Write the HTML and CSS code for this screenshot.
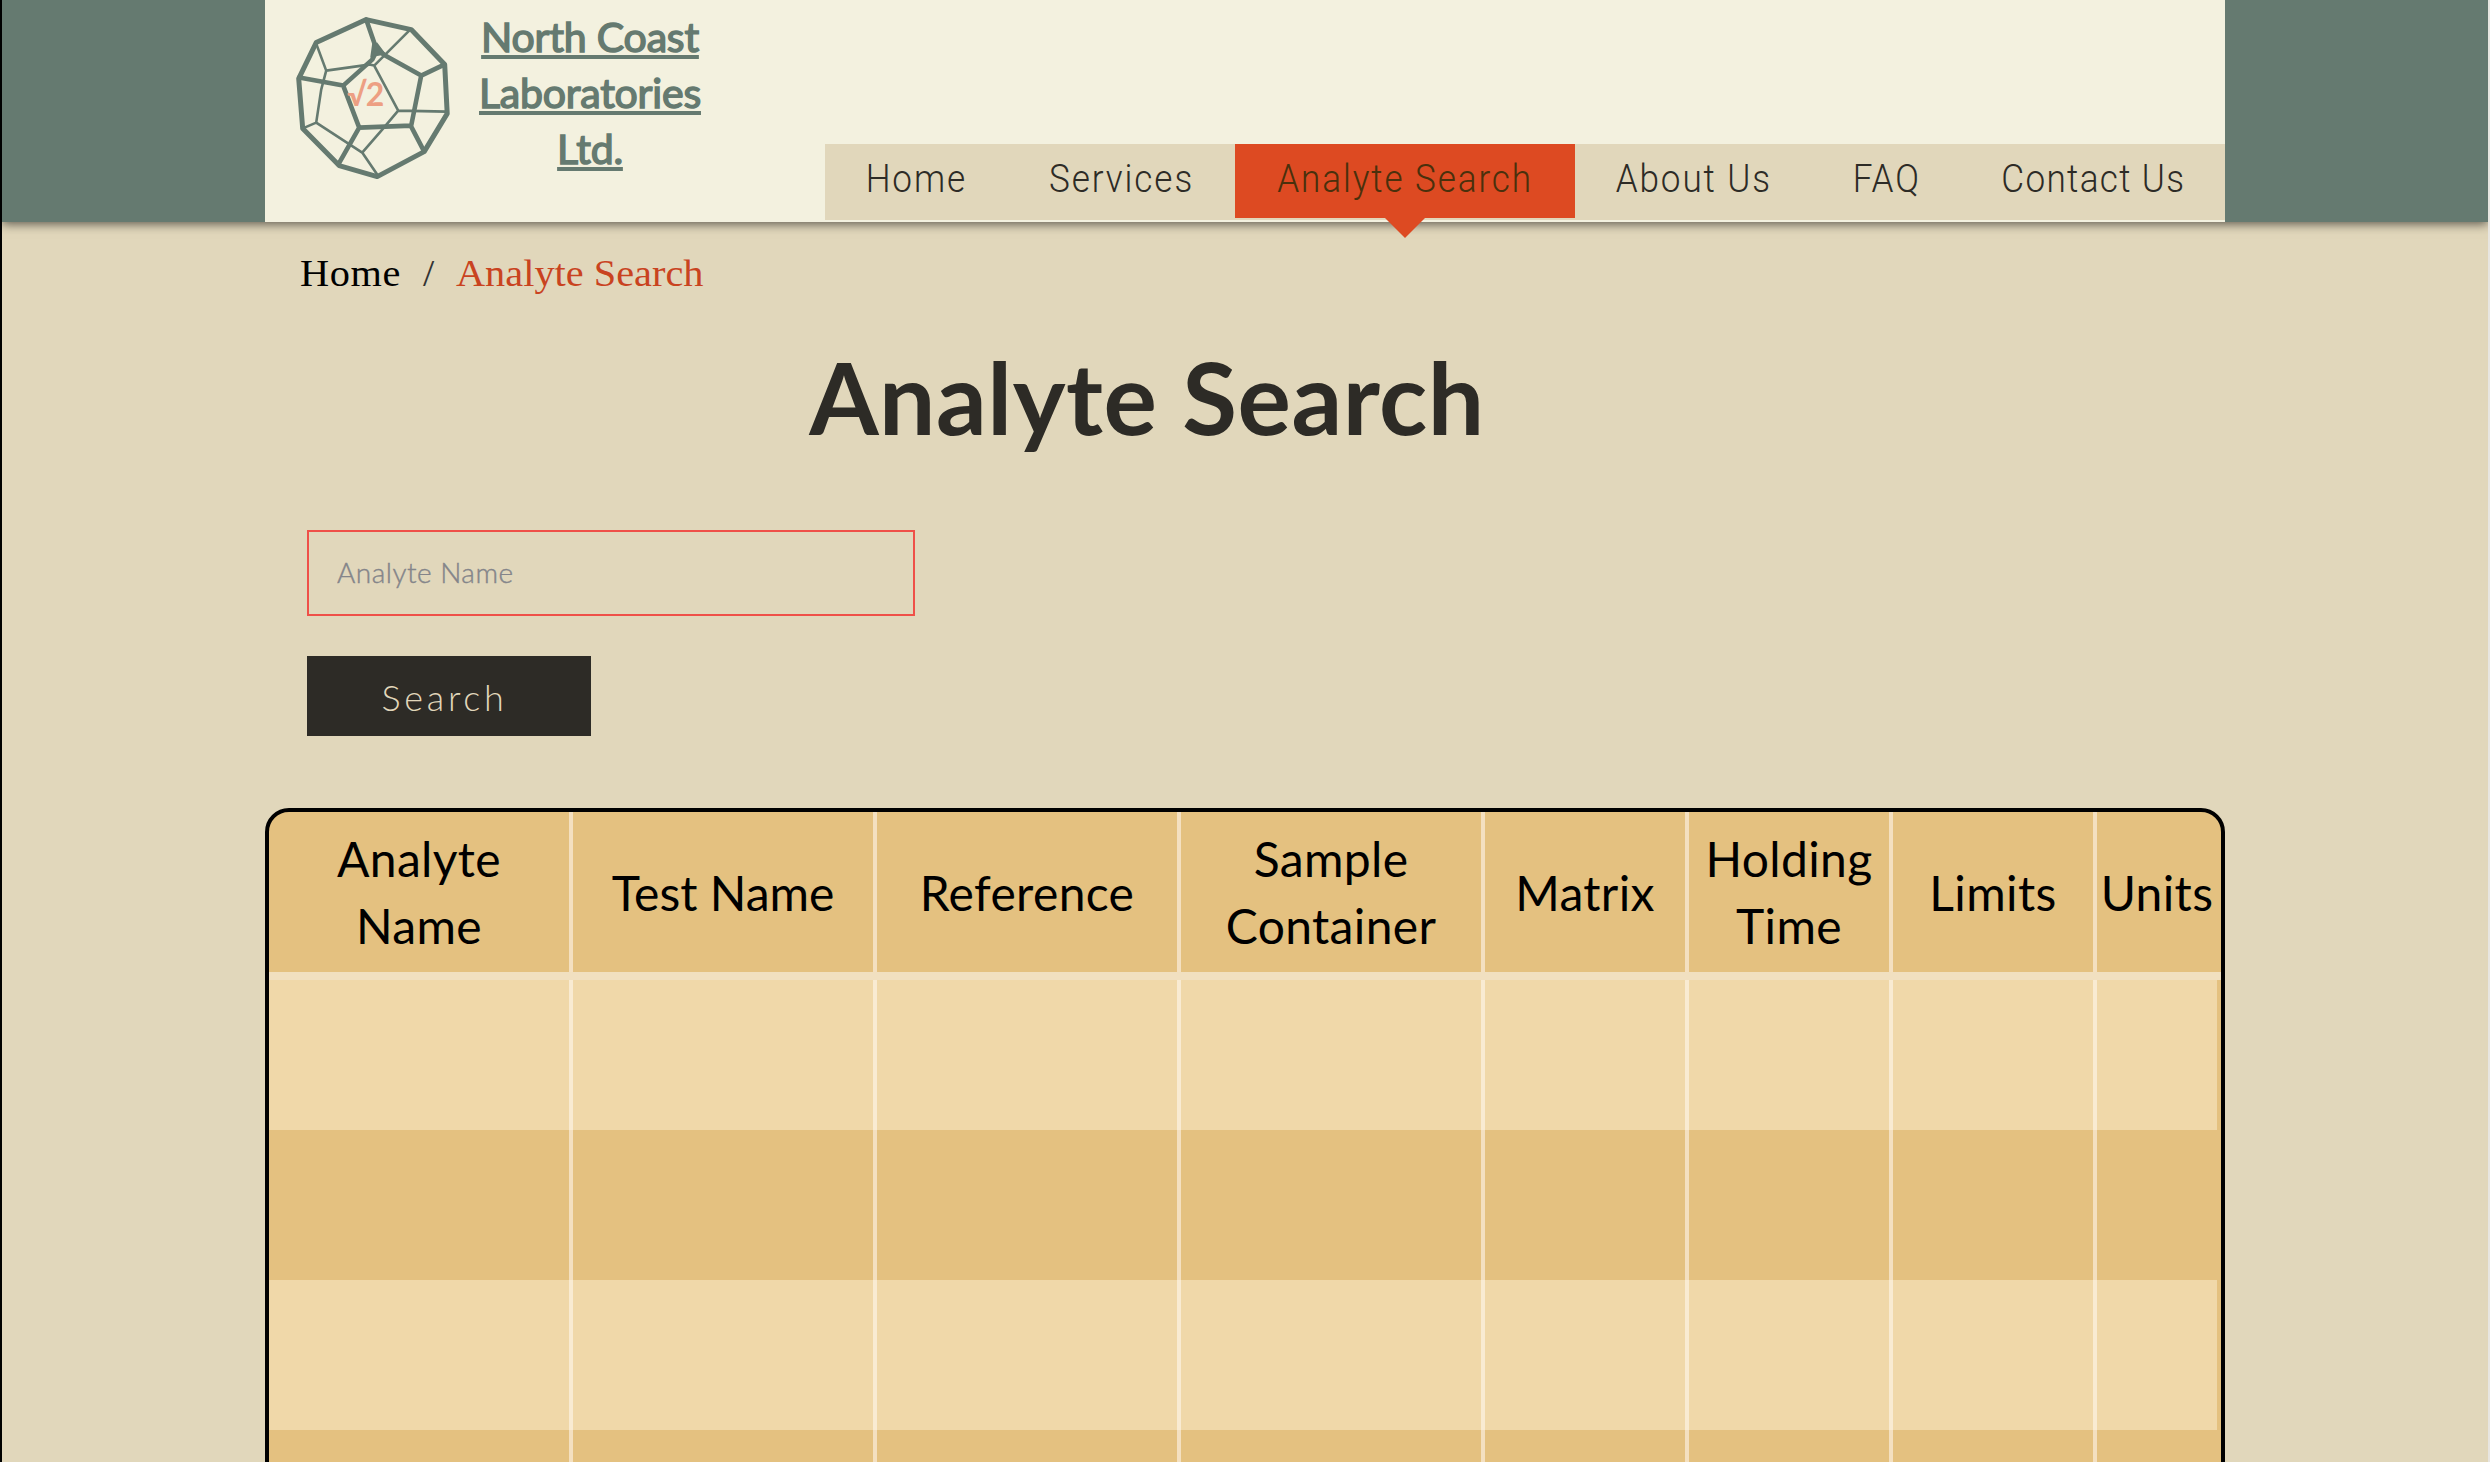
FILE: index.html
```html
<!DOCTYPE html>
<html lang="en">
<head>
<meta charset="utf-8">
<title>Analyte Search</title>
<link rel="stylesheet" href="styles.css">
</head>
<body>
<header class="site-header">
  <div class="header-inner">
    <svg class="logo" viewBox="0 0 160 170" fill="none" stroke="#657a70" stroke-linejoin="round" stroke-linecap="round">
      <g transform="translate(.2 .6)">
        <path stroke-width="5" d="M72 10 117 20 150.500 55 153 104 130 142 83 167 45 156 8.500 119 4.500 69 22 33Z"/>
        <path stroke-width="4.600" d="M72 10 82 39 91 46 127 66 150 55M82 42 78 50 49 76 5 68M49 76 65 118 117 116 127 66M117 117 129 140M65 118 44 155"/>
        <path stroke-width="2.600" d="M116 20 90 46 80 56 104 101 152 102M80 56 75 55 32 61 22 34M32 61 27 80 22 113 8 119M22 113 68 143 83 165M68 143 88 120 104 101"/>
        <path fill="#657a70" stroke="none" d="M78 34 83 33 92 45 80 47 76 48Z"/>
      </g>
      <text class="logo-root" x="53" y="97">√2</text>
    </svg>
    <a class="brand">North Coast<br>Laboratories<br>Ltd.</a>
    <nav class="nav">
      <a class="nav-item home"><span>Home</span></a>
      <a class="nav-item services"><span>Services</span></a>
      <a class="nav-item active"><span>Analyte Search</span></a>
      <a class="nav-item about"><span>About Us</span></a>
      <a class="nav-item faq"><span>FAQ</span></a>
      <a class="nav-item contact"><span>Contact Us</span></a>
    </nav>
  </div>
</header>
<main class="content">
  <div class="breadcrumb"><a class="crumb">Home</a><span class="slash">/</span><span class="current">Analyte Search</span></div>
  <h1 class="title">Analyte Search</h1>
  <form class="search-form">
    <input class="field" type="text" placeholder="Analyte Name">
    <button class="search-button" type="button">Search</button>
  </form>
  <section class="results">
    <div class="row head">
      <div>Analyte<br>Name</div><div class="tight">Test Name</div><div>Reference</div><div>Sample<br>Container</div><div>Matrix</div><div>Holding<br>Time</div><div>Limits</div><div>Units</div>
    </div>
    <div class="row light"><div></div><div></div><div></div><div></div><div></div><div></div><div></div><div></div></div>
    <div class="row"><div></div><div></div><div></div><div></div><div></div><div></div><div></div><div></div></div>
    <div class="row light"><div></div><div></div><div></div><div></div><div></div><div></div><div></div><div></div></div>
    <div class="row"><div></div><div></div><div></div><div></div><div></div><div></div><div></div><div></div></div>
  </section>
</main>
</body>
</html>
```
FILE: styles.css
```css
* { box-sizing: border-box; }
body {
  margin: 0;
  height: 1462px;
  overflow: hidden;
  background: #e1d7bb;
  border-left: 2px solid #000;
  border-right: 2px solid #e8e6e1;
  font-family: Lato, sans-serif;
}
.site-header {
  position: relative;
  height: 222px;
  background: #657a70;
  box-shadow: 0 2px 10px rgba(0, 0, 0, .6);
  clip-path: inset(0 0 -20px 0);
}
.header-inner {
  display: flex;
  align-items: flex-start;
  width: 1960px;
  height: 222px;
  margin-left: 263px;
  background: #f3f1df;
}
.logo { width: 160px; height: 170px; margin: 9px 0 0 29px; overflow: visible; }
.logo-root { font: 700 32px Lato, sans-serif; fill: #ed9f83; stroke: none; letter-spacing: -1px; }
.brand {
  width: 272px;
  margin-top: 9px;
  text-align: center;
  font-size: 41px;
  font-weight: 400;
  line-height: 56px;
  letter-spacing: -.2px;
  color: #657a70;
  -webkit-text-stroke: 1.5px #657a70;
  text-decoration: underline;
}
.nav {
  display: flex;
  width: 1400px;
  height: 76px;
  margin: 144px 0 0 auto;
  background: #e1d7bb;
}
.nav-item {
  position: relative;
  display: flex;
  justify-content: center;
  font: 300 39px/70px Roboto, sans-serif;
  letter-spacing: 2.1px;
  color: #2d2b26;
  white-space: nowrap;
}
.nav-item span { transform: scaleX(.9); }
.home { width: 182px; }
.services { width: 228px; padding-left: 2px; }
.active { width: 340px; height: 74px; background: #dd4a22; color: #4a300c; }
.active::after {
  content: "";
  position: absolute;
  left: 150px;
  top: 74px;
  border: solid transparent;
  border-width: 20px 20px 0;
  border-top-color: #dd4a22;
}
.about { width: 236px; padding-left: 2px; }
.faq { width: 150px; padding-left: 2px; }
.contact { width: 264px; padding-left: 1px; letter-spacing: 1.5px; }
.content { width: 1960px; margin-left: 263px; }
.breadcrumb {
  display: flex;
  height: 60px;
  margin-left: 35px;
  padding-top: 22px;
  font: 37px/60px "Liberation Serif", serif;
  color: #000;
  transform: scaleX(1.09);
  transform-origin: left;
}
.crumb { letter-spacing: .6px; }
.slash { margin: 0 20px; color: #333; }
.current { color: #c9431f; }
.title {
  width: 1764px;
  margin: 54px 0 0;
  text-align: center;
  font-size: 100px;
  line-height: 120px;
  font-weight: 700;
  letter-spacing: .55px;
  color: #2d2b26;
}
.search-form { display: flex; flex-direction: column; gap: 40px; margin: 74px 0 0 42px; }
.field {
  width: 608px;
  height: 86px;
  padding: 0 28px 2px;
  border: 2px solid #ef5048;
  background: transparent;
  font: 300 28px Lato, sans-serif;
  letter-spacing: .5px;
}
.field::placeholder { color: #84858a; -webkit-text-stroke: .4px #84858a; }
.search-button {
  width: 284px;
  height: 80px;
  padding: 2px 9px 0 0;
  border: 0;
  background: #2d2b26;
  color: #e1d7bb;
  font: 300 36px Lato, sans-serif;
  letter-spacing: 3.7px;
}
.results {
  height: 700px;
  margin-top: 72px;
  border: 4px solid #000;
  border-radius: 24px;
  overflow: hidden;
  background: #e4c180;
}
.row {
  display: grid;
  grid-template-columns: repeat(4, 304px) repeat(3, 204px) 120px;
  width: 1948px;
  height: 150px;
}
.row > div { border-right: 4px solid #f4e0c0; }
.row > div:last-child { border-right: 0; }
.light { background: #f0d8a9; }
.light > div { border-color: #f9ebd2; }
.head { width: 1952px; height: 168px; border-bottom: 8px solid #f1e0c0; }
.head > div {
  display: flex;
  align-items: center;
  justify-content: center;
  text-align: center;
  font-size: 48px;
  line-height: 67px;
  letter-spacing: .35px;
  color: #000;
}
.head > .tight { letter-spacing: 0; }
```
